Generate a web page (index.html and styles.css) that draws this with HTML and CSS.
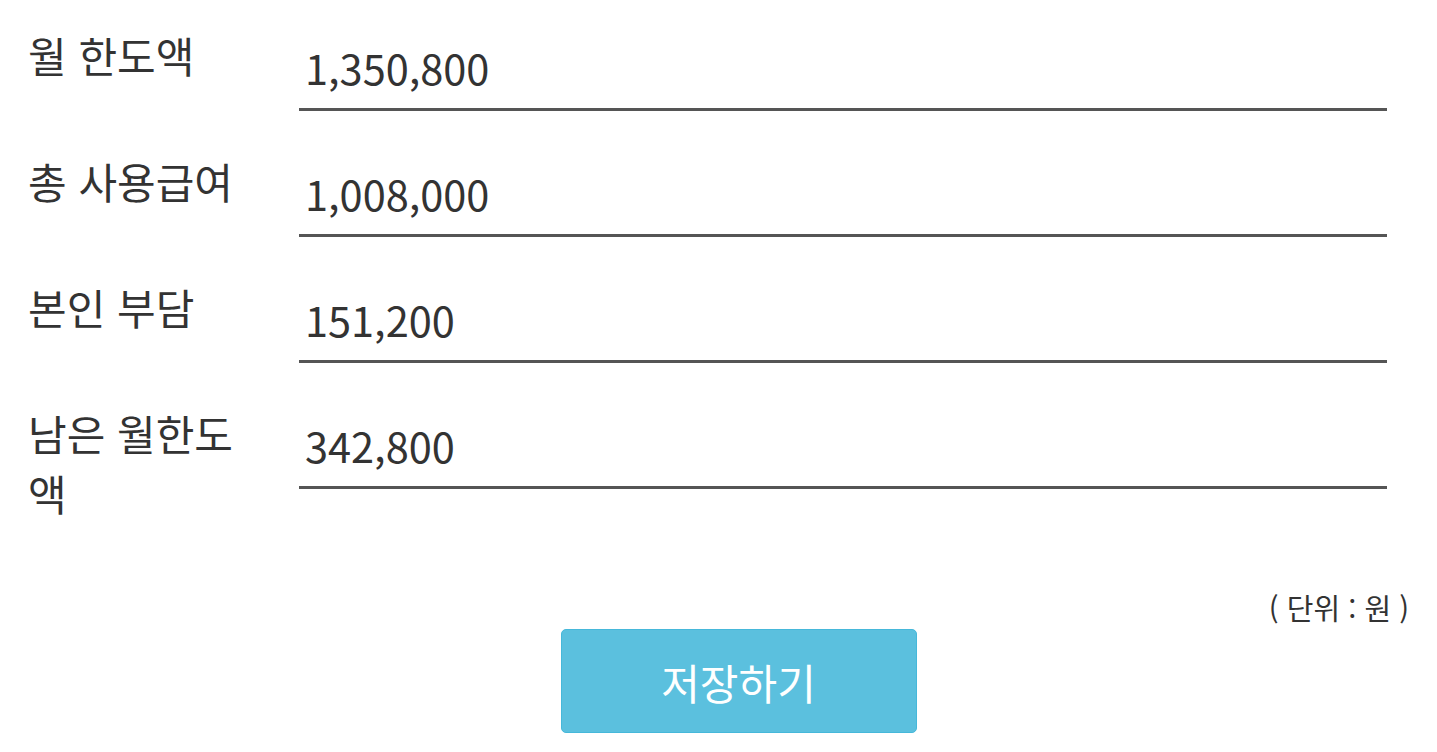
FILE: index.html
```html
<!DOCTYPE html>
<html lang="ko">
<head>
<meta charset="utf-8">
<link rel="stylesheet" href="styles.css">
</head>
<body>
<div class="page">
  <div class="form">
    <div class="row">
      <div class="label">월 한도액</div>
      <div class="field">1,350,800</div>
    </div>
    <div class="row">
      <div class="label">총 사용급여</div>
      <div class="field">1,008,000</div>
    </div>
    <div class="row">
      <div class="label">본인 부담</div>
      <div class="field">151,200</div>
    </div>
    <div class="row">
      <div class="label">남은 월한도액</div>
      <div class="field">342,800</div>
    </div>
  </div>
  <div class="unit">( 단위 : 원 )</div>
  <div class="actions">
    <button class="btn-save" type="button">저장하기</button>
  </div>
</div>
</body>
</html>
```

FILE: styles.css
```css
html, body {
  margin: 0;
  padding: 0;
  background: #fff;
}
body {
  font-family: "Noto Sans CJK KR", "Noto Sans", sans-serif;
  color: #333;
}
.page {
  padding: 26px 28px 0 28px;
}
.form {
  padding-right: 22px;
}
.row {
  display: grid;
  grid-template-columns: 271px 1fr;
  align-items: start;
  margin-bottom: 42px;
}
.label {
  width: 230px;
  font-size: 42px;
  line-height: 60px;
  margin-top: -1px;
  color: #333;
}
.field {
  box-sizing: border-box;
  height: 85px;
  padding: 11px 0 0 6px;
  font-size: 41.5px;
  line-height: 60px;
  color: #333;
  border-bottom: 3px solid #555;
}
.row:last-child {
  margin-bottom: 0;
}
.row + .row {
  margin-top: -1px;
}
.unit {
  margin-top: 66px;
  text-align: right;
  font-size: 29px;
  line-height: 36px;
  color: #333;
}
.actions {
  display: flex;
  justify-content: center;
  padding-left: 40px;
  margin-top: 4px;
}
.btn-save {
  width: 356px;
  height: 104px;
  background: #5bc0de;
  border: 1px solid #46b8da;
  border-radius: 5px;
  color: #fff;
  font-family: "Noto Sans CJK KR", "Noto Sans", sans-serif;
  font-size: 42px;
  padding: 0;
}
```
